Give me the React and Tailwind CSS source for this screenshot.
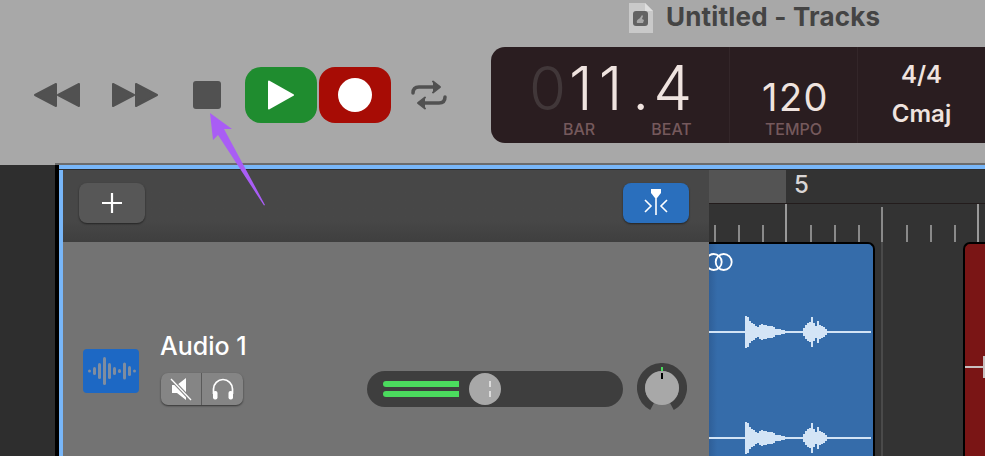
const burst = [
  [36, 16], [38, 15], [40, 11], [42, 9], [44, 8], [46, 6], [48, 5], [50, 7], [52, 8], [54, 7], [56, 7], [58, 6], [60, 6], [62, 6], [64, 5], [66, 3], [68, 3], [70, 3], [72, 2], [74, 2],
  [94, 4], [96, 7], [98, 9], [100, 10], [102, 15], [104, 9], [106, 6], [108, 11], [110, 7], [112, 6], [114, 5], [116, 3],
];

const Wave = ({ y }) => (
  <g fill="#d3e4f6" transform={`translate(0 ${y})`}>
    <rect x="0" y="-1" width="162" height="2" />
    {burst.map(([x, h]) => <rect key={x} x={x} y={-h} width="2" height={h * 2} />)}
  </g>
);

const ticks = [714, 738, 762, 810, 834, 858, 906, 930, 954];
const iconBars = [[5, 3], [10, 8], [15, 16], [20, 28], [25, 16], [30, 8], [35, 4], [40, 17], [45, 10], [50, 3]];

export default function App() {
  return (
    <div className="relative flex h-[456px] w-[985px] flex-col overflow-hidden bg-[#a8a8a8] font-['Inter','Liberation_Sans',sans-serif]">
      <header className="flex h-[163px] shrink-0 flex-col">
        <div className="flex h-[47px] items-start pl-[629px] pt-[1px]">
          <svg width="24" height="30" viewBox="0 0 24 30" className="mt-[2px]">
            <path d="M0 0h16l8 8v22H0z" fill="#c9c9c9" />
            <path d="M16 0l8 8h-8z" fill="#dedede" />
            <rect x="4" y="8" width="15" height="15" rx="3" fill="#636363" />
            <path d="M8 20c-1-3 2-4 3-5l2-3 1 1-1 3 2 1-1 3z" fill="#a9a9a9" />
          </svg>
          <span className="ml-[13px] text-[26px] font-bold leading-[32px] tracking-[0.2px] text-[#444444]">Untitled - Tracks</span>
        </div>
        <div className="flex h-[96px] items-center">
          <svg width="46" height="26" viewBox="0 0 46 26" className="ml-[34px]" fill="#515151" stroke="#515151" strokeWidth="2" strokeLinejoin="round">
            <path d="M1 13L22 2V24zM24 13L45 2V24z" />
          </svg>
          <svg width="46" height="26" viewBox="0 0 46 26" className="ml-[32px]" fill="#515151" stroke="#515151" strokeWidth="2" strokeLinejoin="round">
            <path d="M1 2L22 13L1 24zM24 2L45 13L24 24z" />
          </svg>
          <div className="ml-[35px] mt-[-1px] size-[28px] rounded-[3px] bg-[#515151]" />
          <button className="ml-[24px] flex h-[56px] w-[72px] items-center justify-center rounded-[16px] bg-[#1f8c2f]">
            <svg width="26" height="30" viewBox="0 0 26 30" fill="#fff" stroke="#fff" strokeWidth="2" strokeLinejoin="round">
              <path d="M1 1.5L25 15L1 28.5z" />
            </svg>
          </button>
          <button className="ml-[2px] flex h-[56px] w-[72px] items-center justify-center rounded-[16px] bg-[#a70c05]">
            <span className="size-[34px] rounded-full bg-white" />
          </button>
          <svg width="36" height="30" viewBox="0 0 36 30" className="ml-[20px]" fill="none" stroke="#515151" strokeWidth="3.5" strokeLinecap="round" strokeLinejoin="round">
            <path d="M2 13c0-4 2-6 6-6h19" />
            <path d="M22 1.5l7 5.5-7 5.5" fill="#515151" strokeWidth="2" />
            <path d="M34 17c0 4-2 6-6 6H9" />
            <path d="M14 17.5l-7 5.5 7 5.5" fill="#515151" strokeWidth="2" />
          </svg>
          <div className="ml-[44px] flex h-[96px] flex-1 rounded-l-[14px] bg-[#2a1d20] text-[#efe3df]">
            <div className="flex w-[239px] flex-col border-r border-[#332629] pt-[8px]">
              <div className="flex h-[66px] items-center text-[60px] font-light leading-none">
                <span className="ml-[38px] text-[#413739]">0</span>
                <span className="ml-[3px] tracking-[6px]">11</span>
                <span className="ml-[4px]">.</span>
                <span className="ml-[4px] text-[62px]">4</span>
              </div>
              <div className="flex text-[16px] font-medium leading-[16px] text-[#75595c]">
                <span className="ml-[72px]">BAR</span>
                <span className="ml-[56px]">BEAT</span>
              </div>
            </div>
            <div className="flex w-[128px] flex-col items-center border-r border-[#332629] pt-[26px]">
              <span className="ml-[4px] text-[38px] font-normal leading-[48px] tracking-[1.5px]">120</span>
              <span className="text-[16px] font-medium leading-[16px] text-[#75595c]">TEMPO</span>
            </div>
            <div className="flex flex-1 flex-col items-center pt-[12px] font-semibold">
              <span className="text-[24px] leading-[32px]">4/4</span>
              <span className="mt-[7px] text-[24px] leading-[32px]">Cmaj</span>
            </div>
          </div>
        </div>
      </header>

      <main className="flex min-h-0 flex-1">
        <div className="mt-[2px] w-[55px] shrink-0 bg-[#2e2e2e]" />
        <div className="flex min-w-0 flex-1 border-t-2 border-[#6b6b6b]">
          <div className="w-[4px] shrink-0 bg-black" />
          <div className="flex min-w-0 flex-1 flex-col">
            <div className="h-[4px] shrink-0 bg-[#78b6f8]" />
            <div className="h-[1px] shrink-0 bg-[#2b2b2b]" />
            <div className="flex min-h-0 flex-1">
              <div className="w-[4px] shrink-0 bg-[#78b6f8]" />
              <section className="flex w-[646px] shrink-0 flex-col bg-[#737373]">
                <div className="flex h-[72px] shrink-0 items-start justify-between bg-gradient-to-b from-[#474747] from-70% to-[#3f3f3f] pl-[16px] pr-[20px] pt-[13px]">
                  <button className="flex h-[40px] w-[66px] items-center justify-center rounded-[8px] bg-[#575757] shadow-[0_1px_2px_rgba(0,0,0,0.5)]">
                    <svg width="22" height="22" viewBox="0 0 22 22" stroke="#fff" strokeWidth="2.2"><path d="M11 1v20M1 11h20" /></svg>
                  </button>
                  <button className="flex h-[40px] w-[66px] items-center justify-center rounded-[8px] bg-[#2a6fbd] shadow-[0_1px_2px_rgba(0,0,0,0.5)]">
                    <svg width="26" height="34" viewBox="0 0 26 34" fill="none" stroke="#fff" strokeWidth="1.6">
                      <path d="M8 3h10v4l-4 5h-2L8 7z" fill="#fff" stroke="none" />
                      <path d="M13 10v22M2 17l6 6-6 6M24 17l-6 6 6 6" transform="translate(0 -3)" />
                    </svg>
                  </button>
                </div>
                <div className="flex items-start pl-[20px] pt-[92px]">
                  <div className="mt-[15px] h-[44px] w-[56px] rounded-[4px] bg-[#1d68c4]">
                    <svg width="56" height="44" viewBox="0 0 56 44" fill="#7f8da0">
                      {iconBars.map(([x, h]) => <rect key={x} x={x} y={22 - h / 2} width="3" height={h} rx="1.5" />)}
                    </svg>
                  </div>
                  <div className="ml-[21px] flex w-[200px] flex-col">
                    <span className="text-[25px] font-medium leading-[24px] text-white">Audio 1</span>
                    <div className="ml-[1px] mt-[15px] flex h-[32px] w-[82px] rounded-[7px] bg-[#858585] shadow-[0_1px_2px_rgba(0,0,0,0.55)]">
                      <div className="flex w-[41px] items-center justify-center border-r border-[#5a5a5a]">
                        <svg width="22" height="24" viewBox="0 0 22 24" fill="#fff">
                          <path d="M2 8h5l9-7v22l-9-7H2z" />
                          <path d="M1 2l20 21" stroke="#858585" strokeWidth="3.5" />
                          <path d="M1 2l20 21" stroke="#fff" strokeWidth="1.3" />
                        </svg>
                      </div>
                      <div className="flex flex-1 items-center justify-center">
                        <svg width="24" height="24" viewBox="0 0 24 24" fill="none" stroke="#fff" strokeWidth="1.7">
                          <path d="M2.5 17v-5a9.5 9.5 0 0 1 19 0v5" />
                          <rect x="2" y="14" width="4.5" height="8.5" rx="2" fill="#fff" stroke="none" />
                          <rect x="17.5" y="14" width="4.5" height="8.5" rx="2" fill="#fff" stroke="none" />
                        </svg>
                      </div>
                    </div>
                  </div>
                  <div className="ml-[7px] mt-[37px] flex h-[36px] w-[256px] shrink-0 items-center rounded-full bg-[#3e3e3e] pl-[16px]">
                    <div className="flex flex-col gap-[4px]">
                      <div className="h-[6px] w-[76px] rounded-l-[3px] bg-[#4bdb5e]" />
                      <div className="h-[6px] w-[76px] rounded-l-[3px] bg-[#4bdb5e]" />
                    </div>
                    <div className="ml-[10px] flex size-[32px] flex-col items-center justify-center gap-[4px] rounded-full bg-[#a8a8a8]">
                      <span className="ml-[10px] h-[6px] w-[2px] bg-[#dcdcdc]" />
                      <span className="ml-[10px] h-[6px] w-[2px] bg-[#dcdcdc]" />
                    </div>
                  </div>
                  <svg width="50" height="50" viewBox="0 0 50 50" className="ml-[14px] mt-[29px] shrink-0">
                    <path d="M15.1 43.5A21 21 0 1 1 34.9 43.5" fill="none" stroke="#3e3e3e" strokeWidth="8" />
                    <circle cx="25" cy="25" r="17" fill="#a8a8a8" />
                    <rect x="24" y="4" width="2" height="4" fill="#4bdb5e" />
                    <rect x="24" y="10" width="2" height="6" fill="#000" />
                  </svg>
                </div>
              </section>

              <section className="relative min-w-0 flex-1 overflow-hidden bg-[#333333]">
                <div className="flex h-[34px] border-b border-[#231c1c] bg-[#333333]">
                  <div className="w-[77px] bg-[#545454]" />
                  <span className="ml-[8px] text-[24px] font-medium leading-[30px] text-[#dad6d5]">5</span>
                </div>
                <svg width="276" height="38" viewBox="709 204 276 38" className="block bg-[#333333]">
                  <g fill="#8a8a8a">
                    {ticks.map((x) => <rect key={x} x={x} y="225" width="2" height="17" />)}
                    <rect x="881" y="207" width="2" height="35" />
                  </g>
                  <rect x="785" y="204" width="2" height="38" fill="#9a9a9a" />
                  <rect x="977" y="204" width="2" height="38" fill="#9a9a9a" />
                </svg>
                <div className="flex h-[214px]">
                  <div className="w-[166px] shrink-0 rounded-tr-[7px] border-r-2 border-t-2 border-black bg-gradient-to-r from-[#2f5f98] from-0% via-[#356caa] via-5% to-[#356caa]">
                    <svg width="164" height="212" viewBox="0 0 164 212">
                      <g fill="none" stroke="#fff" strokeWidth="1.8">
                        <circle cx="4.7" cy="18" r="8" />
                        <circle cx="14.7" cy="18" r="8" />
                      </g>
                      <Wave y="88" />
                      <Wave y="194" />
                    </svg>
                  </div>
                  <div className="flex w-[88px] shrink-0 pl-[6px]">
                    <div className="w-[2px] bg-[#4a4a4a]" />
                  </div>
                  <div className="flex-1 rounded-tl-[7px] border-l-2 border-t-2 border-black bg-[#7a1515]">
                    <svg width="24" height="212" viewBox="0 0 24 212">
                      <rect x="0" y="122" width="20" height="2" fill="#c9c0c0" />
                      <rect x="18" y="112" width="4" height="22" fill="#c9c0c0" />
                    </svg>
                  </div>
                </div>
              </section>
            </div>
          </div>
        </div>
      </main>

      <svg width="70" height="100" viewBox="0 0 70 100" className="pointer-events-none absolute left-[205px] top-[110px]">
        <path d="M5 3L27 19L19 19L60 95L59 95.5L13 25L8 30z" fill="#a95df5" />
      </svg>
    </div>
  );
}
